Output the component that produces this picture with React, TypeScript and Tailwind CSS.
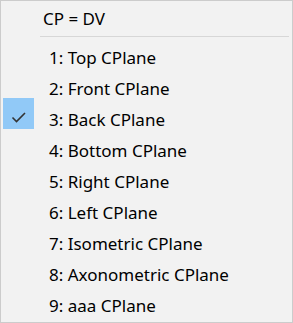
import React from "react";

const items = [
  "1: Top CPlane",
  "2: Front CPlane",
  "3: Back CPlane",
  "4: Bottom CPlane",
  "5: Right CPlane",
  "6: Left CPlane",
  "7: Isometric CPlane",
  "8: Axonometric CPlane",
  "9: aaa CPlane",
];

export default function App() {
  return (
    <div
      className="w-[293px] h-[323px] bg-[#f2f2f2] border border-[#cccccc] text-black flex flex-col overflow-hidden"
      style={{ fontFamily: '"Noto Sans", "Open Sans", sans-serif' }}
    >
      <div className="h-[35px] flex items-center pl-[42px] text-[17px] leading-none">
        CP = DV
      </div>
      <div className="h-px bg-[#d7d7d7] ml-[39px] mr-[3px]" />
      <div className="h-[5px]" />
      <div className="flex flex-col">
        {items.map((t, i) => (
          <div key={t} className="relative h-[31px] flex items-center text-[17px] leading-none">
            {i === 2 && (
              <div className="absolute left-[2px] top-[-6px] w-[31px] h-[31px] bg-[#91c9f7] flex items-center justify-center">
                <svg width="16" height="12" viewBox="0 0 16 12" className="mt-[8px]">
                  <path d="M1.5 5.5 L5.5 9.5 L14 1" fill="none" stroke="#333333" strokeWidth="1.6" />
                </svg>
              </div>
            )}
            <span className="pl-[48px]">{t}</span>
          </div>
        ))}
      </div>
    </div>
  );
}
